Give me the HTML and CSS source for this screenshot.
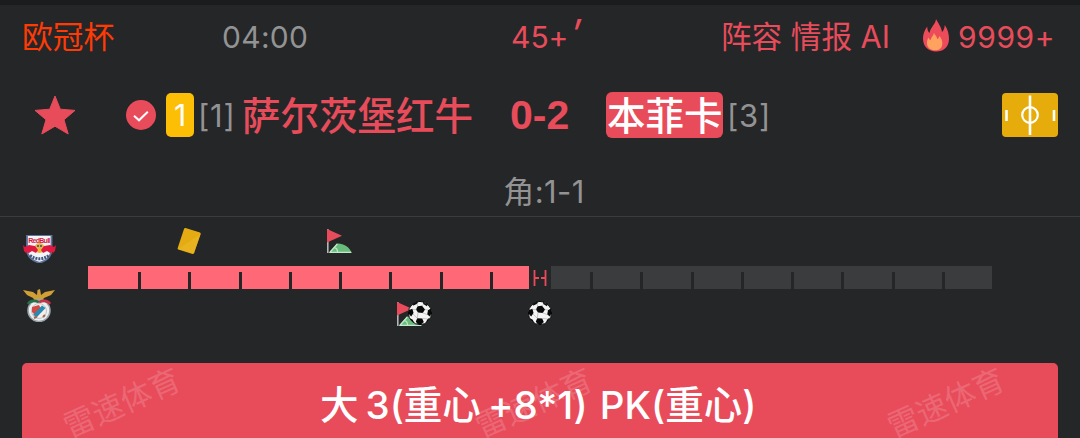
FILE: index.html
```html
<!DOCTYPE html>
<html lang="zh-CN">
<head>
  <meta charset="UTF-8">
  <meta name="viewport" content="width=device-width, initial-scale=1.0">
  <title>欧冠杯</title>
  <link rel="stylesheet" href="styles.css">
</head>
<body>
  <svg width="0" height="0" class="defs">
    <symbol id="ball" viewBox="0 0 24 24">
      <circle cx="12" cy="12" r="11.6" fill="#f4f4f4" stroke="#08090a" stroke-width="1"/>
      <path d="M9.6 5.2 14 4.8 17 8.5 14.8 12 10 11.6 8 8.5Z M1 9 4.5 7.8 5.5 12 3.2 15.5 .8 13Z M20 9.2 22.8 7.6 23.5 12 22 15.5 19.2 13.5Z M9.3 17.2 14.2 17.4 15.8 21 13 23.5 9.3 22.8 7.8 20.4Z M7 1.6 10 .5 9.2 2.8 5.5 4.6 4.2 4Z M15 .8 19.6 3.8 19 5.2 15.3 3Z M2.2 17.4 4.5 18.6 6.3 21.8 3.8 20Z M19.4 18.2 22 16.6 20 20.2 17.8 21.6Z" fill="#08090a"/>
      <path d="M8.5 8.5 4.5 8.6M10 11.5 9.3 17.3M14.5 11.8 19.5 13.7M17 8.4 20 9.2M9.7 5.3 9 2.5M14 4.9 16 2.8M5 13 9 17M14.2 17.4 19.5 18" fill="none" stroke="#aaa" stroke-width=".6"/>
    </symbol>
    <symbol id="flag" viewBox="0 0 26 25">
      <path d="M.8 0V24" stroke="#b5b7b7" stroke-width="1.6"/>
      <path d="M0 0 15 6.8 0 13.500Z" fill="#e84c5b"/>
      <path d="M1.5 24 10 14.500C16 14 22 17.500 25 24Z" fill="#69bd7c"/>
      <path d="M2.5 23.300H24M3.200 23 10.300 15M7 18.500Q10.500 19 10.500 23" fill="none" stroke="#c4e8cb" stroke-width="1.200"/>
    </symbol>
  </svg>

  <div class="top-line"></div>

  <div class="info">
    <span class="league">欧冠杯</span>
    <span class="time">04:00</span>
    <span class="minute">45+<i>′</i></span>
    <span class="links">阵容 情报 AI</span>
    <span class="heat">
      <svg class="fire" viewBox="0 0 26 33">
        <path d="M13 0C15 4 18.500 8 19 13 20.800 11.500 21.500 9 21.800 6 25 11 26 15 26 20 26 28 20.500 32.500 13 32.500S0 27.500 0 19.500C0 15 1.600 11 4.200 7.500 4.300 10.500 4.800 12.300 6.500 14 7.500 8 12.500 5.500 13 0Z" fill="#ee4b5a"/>
        <path d="M11 14C11.800 16 14 17.500 14.200 20 15.500 19.800 16 18.500 16.200 17 18.500 19 19.600 22 19.300 25 19 29.500 16 31.300 12 31.300S4 29 4 24C4 22 4.600 20 5.600 18.500 6 20 6.500 20.800 7.500 21.200 8 18 10.500 17 11 14Z" fill="#ffa260"/>
      </svg>
      <span>9999+</span>
    </span>
  </div>

  <div class="match">
    <svg class="star" viewBox="0 0 42 40">
      <path d="M21 1 26.300 14.200 41 15.400 30 24.700 34.200 39 21 31.200 7.800 39 12 24.700 1 15.400 15.700 14.200Z" fill="#e84c5b" stroke="#e84c5b" stroke-linejoin="round"/>
    </svg>
    <div class="home">
      <svg class="check" viewBox="0 0 30 30">
        <circle cx="15" cy="15" r="15" fill="#e84c5b"/>
        <path d="M8 15.800 13 20.300 21.800 11.700" fill="none" stroke="#fff" stroke-width="2"/>
      </svg>
      <span class="yellow">1</span>
      <span class="rank">[1]</span>
      <span class="name">萨尔茨堡红牛</span>
    </div>
    <span class="score">0-2</span>
    <div class="away">
      <span class="name">本菲卡</span>
      <span class="rank">[3]</span>
    </div>
    <svg class="pitch" viewBox="0 0 56 44">
      <rect width="56" height="44" rx="4" fill="#e6ac0b"/>
      <path d="M28 2.500V42M4.500 17V28M52 17V28" stroke="#fff" stroke-width="2.600"/>
      <circle cx="28" cy="22" r="7.800" fill="none" stroke="#fff" stroke-width="2.200"/>
    </svg>
  </div>

  <div class="corner">角:1-1</div>

  <div class="timeline">
    <div class="logos">
      <svg class="salzburg" viewBox="0 0 33 28">
        <path d="M4 0H28.500V15C28 22 23 26 16.500 27.800 10 26 4.500 22 4 15Z" fill="#f3f4f8" stroke="#60749b" stroke-width="1.800"/>
        <text x="16.300" y="7.500" text-anchor="middle" textLength="22" class="bull-text">RedBull</text>
        <circle cx="16.500" cy="13" r="5" fill="#e9b33c"/>
        <path d="M0 10 2 12 6 10 12 11 15 15 13 18 9 16 6 18 3 17 5 20 1 16ZM33 10 31 12 27 10 21 11 18 15 20 18 24 16 27 18 30 17 28 20 32 16Z" fill="#df1940"/>
        <path d="M14 10h2v2h-2zm3 0h2v2h-2z" fill="#52668f"/>
        <path d="M7 20.500Q16.500 27 26 20.500" fill="none" stroke="#40577f" stroke-width="3" stroke-dasharray="2 1"/>
      </svg>
      <svg class="benfica" viewBox="0 0 32 33">
        <path d="M0 1 10 3 14 6 14.500 1 17 0 18 6 22 3 32 1 28 6 21 9 19 12 16 11 12 12 10 9 4 6Z" fill="#d1a035"/>
        <circle cx="16" cy="21.500" r="11" fill="#edf0f0" stroke="#9ca5aa" stroke-width="1.500"/>
        <path d="M5 15Q8 10 16 13" fill="none" stroke="#25704a" stroke-width="2.500"/>
        <path d="M16 13Q24 10 27 15" fill="none" stroke="#c03445" stroke-width="2.500"/>
        <circle cx="16" cy="22" r="7.500" fill="#f5eee9" stroke="#bfc4c6"/>
        <path d="M9 18 16 16 18 20 12 26 9 23Z" fill="#d34943"/>
        <path d="M10 26 19 16.500 22.500 19 14 28Z" fill="#268ab2"/>
        <path d="M11 29 14 27.500M20 28 22 26" stroke="#9b6561" stroke-width="2"/>
      </svg>
    </div>
    <div class="track">
      <div class="bar">
        <div class="on"></div><div class="on"></div><div class="on"></div>
        <div class="on"></div><div class="on"></div><div class="on"></div>
        <div class="on"></div><div class="on"></div><div class="on"></div>
        <div></div><div></div><div></div>
        <div></div><div></div><div></div>
        <div></div><div></div><div></div>
      </div>
      <div class="half">
        <svg viewBox="0 0 14 16"><path d="M1.500 0V16M12.500 0V16M1.500 8H6M8 8H12" stroke="#e84c5b" stroke-width="1.800"/></svg>
      </div>
      <svg class="event card" viewBox="0 0 24 28">
        <path d="M8.500 1 23 5.500Q24 6 23.700 7L17 26Q16.600 27.300 15.500 27L1.300 22.500Q.3 22 .7 21L7 2Q7.500.6 8.500 1Z" fill="#e5ab13"/>
        <path d="M23.500 7 17 26.500 1 22Z" fill="#edb829" opacity=".55"/>
      </svg>
      <svg class="event flag1"><use href="#flag"/></svg>
      <svg class="event flag2"><use href="#flag"/></svg>
      <svg class="event goal1"><use href="#ball"/></svg>
      <svg class="event goal2"><use href="#ball"/></svg>
    </div>
  </div>

  <div class="tip">
    <span class="mark mark1">雷速体育</span>
    <span class="mark mark2">雷速体育</span>
    <span class="mark mark3">雷速体育</span>
    <div class="tip-text">
      <span class="big">大</span><span class="three">3(</span><span>重心</span><span class="plus">+8*1)</span><span class="pk">PK(</span><span>重心</span><span>)</span>
    </div>
  </div>
</body>
</html>
```
FILE: styles.css
```css
* {
  box-sizing: border-box;
}

body {
  margin: 0;
  height: 438px;
  overflow: hidden;
  background: #252628;
  color: #939394;
  font-family: Inter, "Noto Sans CJK SC", sans-serif;
  font-feature-settings: "calt" 0;
  font-size: 30px;
  white-space: nowrap;
}

svg {
  display: block;
  flex: none;
}

.defs {
  position: absolute;
}

.top-line {
  height: 5px;
  background: #1b1c1e;
}

.info {
  display: grid;
  grid-template-columns: 200px 289px 210px 199px auto;
  align-items: center;
  height: 63px;
  padding-left: 22px;
  line-height: 40px;
  color: #e84c5b;
}

.league {
  color: #ff3b05;
  font-size: 30.8px;
}

.time {
  color: #939394;
  letter-spacing: 0.3px;
}

.minute i {
  display: inline-block;
  margin-left: 3px;
  font-size: 40px;
  line-height: 30px;
}

.links {
  font-size: 30.6px;
}

.heat {
  display: flex;
  align-items: center;
  gap: 9px;
  padding-left: 3px;
  letter-spacing: 0.6px;
}

.fire {
  width: 26px;
  height: 33px;
  margin-top: -3px;
}

.match {
  display: flex;
  align-items: center;
  height: 94px;
  padding: 0 22px 0 34px;
}

.star {
  width: 42px;
  height: 40px;
  margin-right: 50px;
}

.home {
  display: flex;
  align-items: center;
  width: 384px;
}

.check {
  width: 30px;
  height: 30px;
  margin-right: 10px;
}

.yellow {
  width: 28px;
  height: 44px;
  border-radius: 5px;
  background: #fdbf06;
  color: #fff;
  line-height: 44px;
  text-align: center;
}

.rank {
  margin-left: 4px;
  width: 39px;
  font-size: 31px;
  letter-spacing: 0.8px;
}

.name {
  margin-left: 5px;
  padding-top: 2px;
  color: #e84c5b;
  font-size: 38.5px;
  font-weight: 500;
  line-height: 46px;
}

.score {
  width: 96px;
  color: #e84c5b;
  font: bold 41px/44px "Liberation Sans", sans-serif;
}

.away {
  display: flex;
  align-items: center;
}

.away .name {
  width: 117px;
  height: 46px;
  margin: 0;
  padding: 0 0 0 1px;
  border-radius: 6px;
  background: #e84c5b;
  color: #fff;
  line-height: 48px;
}

.pitch {
  width: 56px;
  height: 44px;
  margin-left: auto;
}

.corner {
  height: 55px;
  padding-left: 8px;
  border-bottom: 1px solid #3b3c3e;
  font-size: 31px;
  letter-spacing: 0.4px;
  line-height: 60px;
  text-align: center;
}

.timeline {
  display: flex;
  height: 146px;
}

.logos {
  display: flex;
  flex-direction: column;
  align-items: center;
  gap: 26px;
  width: 66px;
  margin-right: 22px;
  padding: 18px 0 0 12px;
}

.salzburg {
  width: 33px;
  height: 28px;
}

.benfica {
  width: 32px;
  height: 33px;
}

.bull-text {
  font: bold 7px "Liberation Sans", sans-serif;
  fill: #dc1b3e;
}

.track {
  position: relative;
  width: 904px;
  padding-top: 49px;
}

.bar {
  display: grid;
  grid-template-columns: repeat(18, 1fr);
  height: 23px;
}

.bar div {
  position: relative;
  background: #3b3c3e;
}

.bar .on {
  background: #ff6877;
}

.bar div + div::before {
  content: "";
  position: absolute;
  left: 0;
  top: 6px;
  bottom: 0;
  width: 3px;
  background: #252628;
}

.half {
  position: absolute;
  left: 441px;
  top: 49px;
  display: flex;
  align-items: center;
  justify-content: center;
  width: 22px;
  height: 23px;
  background: #252628;
}

.half svg {
  width: 14px;
  height: 16px;
}

.event {
  position: absolute;
}

.card {
  left: 89px;
  top: 10px;
  width: 24px;
  height: 28px;
}

.flag1,
.flag2 {
  width: 26px;
  height: 25px;
}

.flag1 {
  left: 239px;
  top: 12px;
}

.flag2 {
  left: 309px;
  top: 85px;
}

.goal1,
.goal2 {
  top: 84px;
  width: 24px;
  height: 24px;
}

.goal1 {
  left: 320px;
}

.goal2 {
  left: 440px;
}

.tip {
  position: relative;
  height: 75px;
  margin: 0 22px;
  border-radius: 5px 5px 0 0;
  background: #e84c5b;
}

.tip-text {
  position: relative;
  display: flex;
  padding-left: 298px;
  color: #fff;
  font-size: 38.5px;
  font-weight: 500;
  line-height: 84px;
}

.three,
.plus {
  margin-left: 7px;
}

.pk {
  margin-left: 12px;
}

.mark {
  position: absolute;
  top: 20px;
  color: rgba(255, 255, 255, 0.17);
  font-size: 31px;
  line-height: 40px;
  transform: rotate(-24deg);
}

.mark1 {
  left: 38px;
}

.mark2 {
  left: 450px;
}

.mark3 {
  left: 862px;
}
```
